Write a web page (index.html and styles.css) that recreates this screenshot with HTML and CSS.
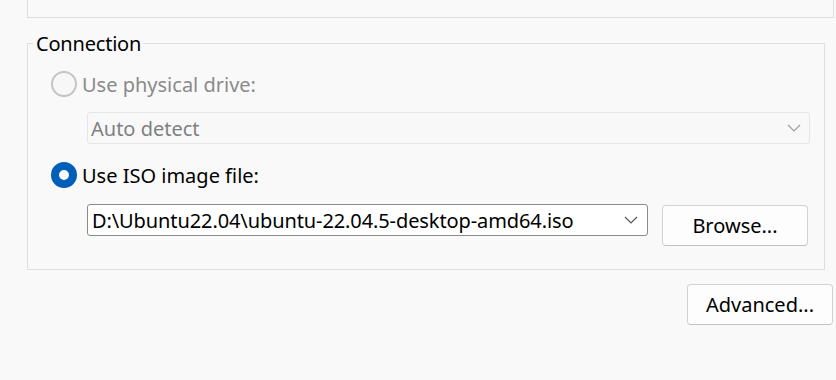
FILE: index.html
```html
<!DOCTYPE html>
<html lang="en">
<head>
  <meta charset="UTF-8" />
  <meta name="viewport" content="width=device-width, initial-scale=1" />
  <title>Connection</title>
  <link rel="stylesheet" href="styles.css">
</head>
<body>
  <div class="top-panel"></div>

  <fieldset class="group">
    <legend>Connection</legend>

    <label class="radio-row disabled">
      <span class="radio"></span>
      <span class="radio-text">Use physical drive:</span>
    </label>

    <div class="combo combo-disabled">
      <span class="combo-text">Auto detect</span>
      <svg class="chevron" width="14" height="8" viewBox="0 0 14 8">
        <polyline points="1,1 7,7 13,1" fill="none" stroke="#a0a0a0" stroke-width="1.2" />
      </svg>
    </div>

    <label class="radio-row">
      <span class="radio checked"></span>
      <span class="radio-text">Use ISO image file:</span>
    </label>

    <div class="file-row">
      <div class="combo combo-iso">
        <span class="combo-text">D:\Ubuntu22.04\ubuntu-22.04.5-desktop-amd64.iso</span>
        <svg class="chevron" width="14" height="8" viewBox="0 0 14 8">
          <polyline points="1,1 7,7 13,1" fill="none" stroke="#555" stroke-width="1.2" />
        </svg>
      </div>
      <button class="btn browse-btn">Browse...</button>
    </div>
  </fieldset>

  <div class="footer">
    <button class="btn">Advanced...</button>
  </div>
</body>
</html>
```

FILE: styles.css
```css
body {
  margin: 0;
  padding: 0;
  background-color: #f9f9f9;
  font-family: 'Noto Sans', 'Open Sans', sans-serif;
  font-size: 20px;
  color: #000;
  width: 836px;
  height: 380px;
  overflow: hidden;
}

.top-panel {
  box-sizing: border-box;
  margin-left: 27px;
  width: 807px;
  height: 18px;
  border: 1px solid #dedede;
  border-top: none;
}

.group {
  box-sizing: border-box;
  margin: 12px 0 0 27px;
  width: 798px;
  min-width: 0;
  padding: 14px 0 23px 23px;
  border: 1px solid #dedede;
}

.group legend {
  padding: 0 2px 0 3px;
  margin-left: -18px;
  line-height: 27px;
  height: 27px;
  letter-spacing: -0.2px;
}

.radio-row {
  display: flex;
  align-items: center;
  gap: 5px;
  height: 26px;
  line-height: 27px;
}

.radio {
  box-sizing: border-box;
  width: 26px;
  height: 26px;
  border-radius: 50%;
  border: 2px solid #c4c4c4;
  background-color: #f7f7f7;
}

.radio.checked {
  border: 8px solid #005fb8;
  background-color: #fff;
}

.disabled .radio-text {
  color: #8a8a8a;
}

.combo {
  box-sizing: border-box;
  display: flex;
  align-items: center;
  justify-content: space-between;
  height: 32px;
  line-height: 27px;
  border-radius: 3px;
}

.combo-disabled {
  margin: 15px 0 18px 36px;
  width: 723px;
  padding: 0 8px 0 3px;
  border: 1px solid #e5e5e5;
  background-color: #f8f8f8;
  color: #808080;
}

.combo-iso {
  width: 561px;
  padding: 0 9px 0 4px;
  border: 1px solid #8b8b8b;
  background-color: #fff;
}

.combo-iso .combo-text {
  letter-spacing: -0.1px;
}

.file-row {
  display: flex;
  align-items: flex-start;
  gap: 14px;
  margin: 16px 0 0 36px;
}

.btn {
  box-sizing: border-box;
  width: 146px;
  height: 41px;
  padding: 0;
  font-family: inherit;
  font-size: 20px;
  color: #000;
  background-color: #fdfdfd;
  border: 1px solid #d3d3d3;
  border-bottom-color: #c2c2c2;
  border-radius: 4px;
}

.browse-btn {
  margin-top: 1px;
}

.footer {
  display: flex;
  justify-content: flex-end;
  padding: 14px 3px 0 0;
}
```
